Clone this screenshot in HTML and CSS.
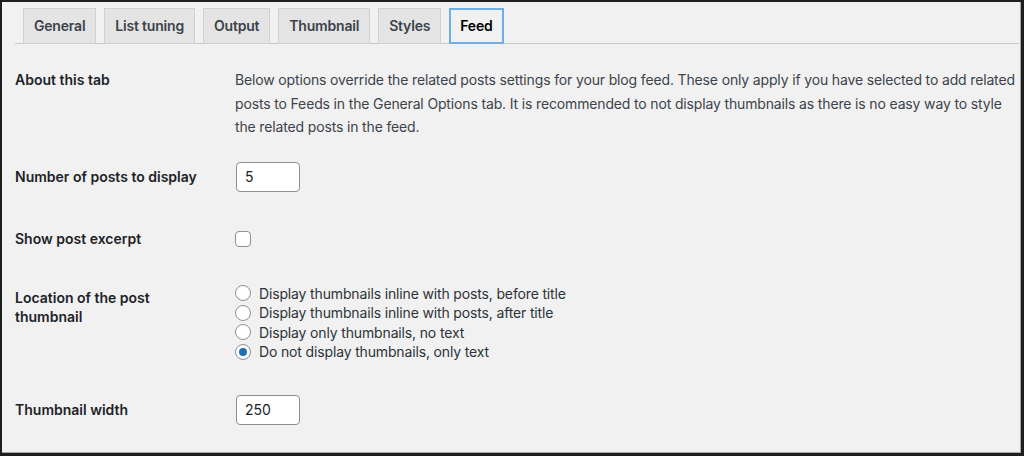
FILE: index.html
```html
<!DOCTYPE html>
<html lang="en">
<head>
  <meta charset="UTF-8">
  <meta name="viewport" content="width=device-width, initial-scale=1.0">
  <title>Feed settings</title>
  <link rel="stylesheet" href="styles.css">
</head>
<body>
  <div class="frame">
    <nav class="tabs">
      <a class="tab">General</a>
      <a class="tab">List tuning</a>
      <a class="tab">Output</a>
      <a class="tab">Thumbnail</a>
      <a class="tab">Styles</a>
      <a class="tab active">Feed</a>
    </nav>

    <div class="form">
      <div class="row row-about">
        <div class="label">About this tab</div>
        <p class="desc">Below options override the related posts settings for your blog feed. These only apply if you have selected to add related posts to Feeds in the General Options tab. It is recommended to not display thumbnails as there is no easy way to style the related posts in the feed.</p>
      </div>

      <div class="row row-number">
        <label class="label" for="limit">Number of posts to display</label>
        <input class="text-input" type="text" id="limit" value="5">
      </div>

      <div class="row row-excerpt">
        <label class="label" for="excerpt">Show post excerpt</label>
        <span class="checkbox" id="excerpt"></span>
      </div>

      <div class="row row-location">
        <div class="label label-wrap">Location of the post thumbnail</div>
        <ul class="radios">
          <li><span class="radio"></span>Display thumbnails inline with posts, before title</li>
          <li><span class="radio"></span>Display thumbnails inline with posts, after title</li>
          <li><span class="radio"></span>Display only thumbnails, no text</li>
          <li><span class="radio checked"></span>Do not display thumbnails, only text</li>
        </ul>
      </div>

      <div class="row row-width">
        <label class="label" for="thumb-width">Thumbnail width</label>
        <input class="text-input" type="text" id="thumb-width" value="250">
      </div>
    </div>
  </div>
</body>
</html>
```

FILE: styles.css
```css
* {
  box-sizing: border-box;
}
body {
  margin: 0;
  font-family: Inter, "Noto Sans", sans-serif;
  font-size: 14px;
  color: #1d2327;
}
.frame {
  width: 1024px;
  height: 456px;
  background-color: #f1f1f1;
  border: 2px solid #1e1e1e;
  border-right-width: 3px;
  border-bottom-width: 3px;
  box-shadow: inset -1px -1px 0 #a7a7a7;
  overflow: hidden;
}
.tabs {
  display: flex;
  gap: 8px;
  margin: 0 2px 0 13px;
  padding: 6px 0 0 8px;
  border-bottom: 1px solid #c8c8c8;
}
.tab {
  padding: 5px 10px;
  line-height: 24px;
  font-weight: 600;
  letter-spacing: -0.2px;
  color: #3c434a;
  background-color: #e4e4e4;
  border: 1px solid #d0d0d0;
  margin-bottom: -1px;
}
.tab.active {
  color: #000;
  background-color: #f1f1f1;
  border: 2px solid #72aee6;
  padding: 4px 9px;
}
.form {
  display: flex;
  flex-direction: column;
  padding-left: 13px;
}
.row {
  display: flex;
  align-items: center;
}
.label {
  width: 220px;
  flex-shrink: 0;
  font-weight: 600;
  line-height: 20px;
  color: #1d2327;
}
.row-about {
  align-items: flex-start;
  margin-top: 24px;
}
.row-about .label {
  line-height: 24px;
}
.desc {
  margin: 0;
  line-height: 23.5px;
  letter-spacing: -0.15px;
  color: #3c434a;
  padding-right: 4px;
}
.row-number {
  margin-top: 23px;
}
.row-excerpt {
  margin-top: 37px;
}
.row-location {
  align-items: flex-start;
  margin-top: 35px;
}
.label-wrap {
  width: 220px;
  padding-right: 60px;
  padding-top: 4px;
  line-height: 19px;
}
.row-width {
  margin-top: 33px;
}
.text-input {
  width: 64px;
  height: 30px;
  margin: 0 0 0 1px;
  padding: 0 8px;
  font-family: inherit;
  font-size: 14px;
  color: #1d2327;
  background-color: #fff;
  border: 1px solid #8c8f94;
  border-radius: 4px;
}
.checkbox {
  display: block;
  width: 16px;
  height: 16px;
  background-color: #fff;
  border: 1px solid #8c8f94;
  border-radius: 4px;
}
.radios {
  list-style: none;
  margin: 0;
  padding: 0;
  letter-spacing: -0.15px;
  color: #2c3338;
}
.radios li {
  display: flex;
  align-items: center;
  line-height: 19.5px;
}
.radio {
  width: 16px;
  height: 16px;
  margin-right: 8px;
  border: 1px solid #8c8f94;
  border-radius: 50%;
  background-color: #fff;
  position: relative;
}
.radio.checked::after {
  content: "";
  position: absolute;
  left: 3px;
  top: 3px;
  width: 8px;
  height: 8px;
  border-radius: 50%;
  background-color: #2271b1;
}
```
